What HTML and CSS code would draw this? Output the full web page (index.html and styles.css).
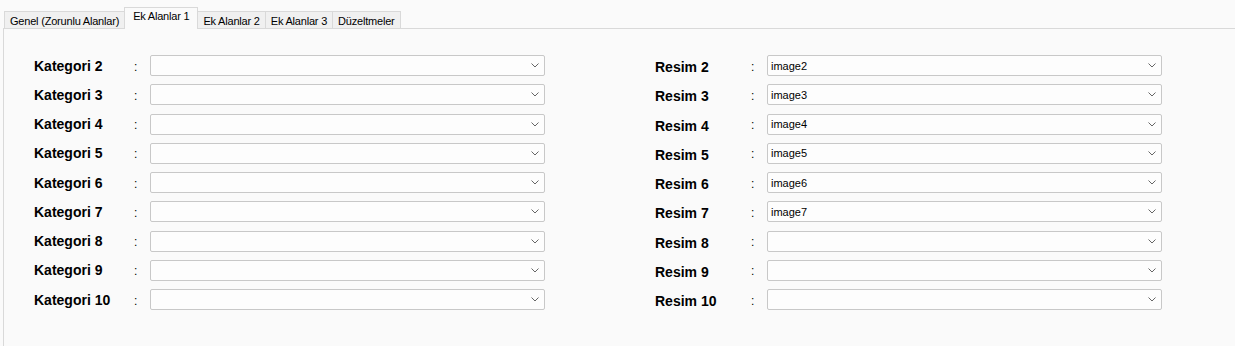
FILE: index.html
```html
<!DOCTYPE html>
<html lang="tr">

<head>
  <meta charset="UTF-8">
  <meta name="viewport" content="width=device-width, initial-scale=1.0">
  <title>Ek Alanlar</title>
  <link rel="stylesheet" href="styles.css">
</head>

<body>
  <div class="tab-strip">
    <div class="tab">Genel (Zorunlu Alanlar)</div>
    <div class="tab active">Ek Alanlar 1</div>
    <div class="tab">Ek Alanlar 2</div>
    <div class="tab">Ek Alanlar 3</div>
    <div class="tab">Düzeltmeler</div>
  </div>

  <div class="tab-panel">
    <div class="field-col left">
      <div class="row"><span class="label">Kategori 2</span><span class="colon">:</span><div class="combo"><span class="value"></span><svg class="chevron" width="8" height="5" viewBox="0 0 8 5"><path d="M0.5 0.5 L4 4 L7.5 0.5" /></svg></div></div>
      <div class="row"><span class="label">Kategori 3</span><span class="colon">:</span><div class="combo"><span class="value"></span><svg class="chevron" width="8" height="5" viewBox="0 0 8 5"><path d="M0.5 0.5 L4 4 L7.5 0.5" /></svg></div></div>
      <div class="row"><span class="label">Kategori 4</span><span class="colon">:</span><div class="combo"><span class="value"></span><svg class="chevron" width="8" height="5" viewBox="0 0 8 5"><path d="M0.5 0.5 L4 4 L7.5 0.5" /></svg></div></div>
      <div class="row"><span class="label">Kategori 5</span><span class="colon">:</span><div class="combo"><span class="value"></span><svg class="chevron" width="8" height="5" viewBox="0 0 8 5"><path d="M0.5 0.5 L4 4 L7.5 0.5" /></svg></div></div>
      <div class="row"><span class="label">Kategori 6</span><span class="colon">:</span><div class="combo"><span class="value"></span><svg class="chevron" width="8" height="5" viewBox="0 0 8 5"><path d="M0.5 0.5 L4 4 L7.5 0.5" /></svg></div></div>
      <div class="row"><span class="label">Kategori 7</span><span class="colon">:</span><div class="combo"><span class="value"></span><svg class="chevron" width="8" height="5" viewBox="0 0 8 5"><path d="M0.5 0.5 L4 4 L7.5 0.5" /></svg></div></div>
      <div class="row"><span class="label">Kategori 8</span><span class="colon">:</span><div class="combo"><span class="value"></span><svg class="chevron" width="8" height="5" viewBox="0 0 8 5"><path d="M0.5 0.5 L4 4 L7.5 0.5" /></svg></div></div>
      <div class="row"><span class="label">Kategori 9</span><span class="colon">:</span><div class="combo"><span class="value"></span><svg class="chevron" width="8" height="5" viewBox="0 0 8 5"><path d="M0.5 0.5 L4 4 L7.5 0.5" /></svg></div></div>
      <div class="row"><span class="label">Kategori 10</span><span class="colon">:</span><div class="combo"><span class="value"></span><svg class="chevron" width="8" height="5" viewBox="0 0 8 5"><path d="M0.5 0.5 L4 4 L7.5 0.5" /></svg></div></div>
    </div>

    <div class="field-col right">
      <div class="row"><span class="label">Resim 2</span><span class="colon">:</span><div class="combo"><span class="value">image2</span><svg class="chevron" width="8" height="5" viewBox="0 0 8 5"><path d="M0.5 0.5 L4 4 L7.5 0.5" /></svg></div></div>
      <div class="row"><span class="label">Resim 3</span><span class="colon">:</span><div class="combo"><span class="value">image3</span><svg class="chevron" width="8" height="5" viewBox="0 0 8 5"><path d="M0.5 0.5 L4 4 L7.5 0.5" /></svg></div></div>
      <div class="row"><span class="label">Resim 4</span><span class="colon">:</span><div class="combo"><span class="value">image4</span><svg class="chevron" width="8" height="5" viewBox="0 0 8 5"><path d="M0.5 0.5 L4 4 L7.5 0.5" /></svg></div></div>
      <div class="row"><span class="label">Resim 5</span><span class="colon">:</span><div class="combo"><span class="value">image5</span><svg class="chevron" width="8" height="5" viewBox="0 0 8 5"><path d="M0.5 0.5 L4 4 L7.5 0.5" /></svg></div></div>
      <div class="row"><span class="label">Resim 6</span><span class="colon">:</span><div class="combo"><span class="value">image6</span><svg class="chevron" width="8" height="5" viewBox="0 0 8 5"><path d="M0.5 0.5 L4 4 L7.5 0.5" /></svg></div></div>
      <div class="row"><span class="label">Resim 7</span><span class="colon">:</span><div class="combo"><span class="value">image7</span><svg class="chevron" width="8" height="5" viewBox="0 0 8 5"><path d="M0.5 0.5 L4 4 L7.5 0.5" /></svg></div></div>
      <div class="row"><span class="label">Resim 8</span><span class="colon">:</span><div class="combo"><span class="value"></span><svg class="chevron" width="8" height="5" viewBox="0 0 8 5"><path d="M0.5 0.5 L4 4 L7.5 0.5" /></svg></div></div>
      <div class="row"><span class="label">Resim 9</span><span class="colon">:</span><div class="combo"><span class="value"></span><svg class="chevron" width="8" height="5" viewBox="0 0 8 5"><path d="M0.5 0.5 L4 4 L7.5 0.5" /></svg></div></div>
      <div class="row"><span class="label">Resim 10</span><span class="colon">:</span><div class="combo"><span class="value"></span><svg class="chevron" width="8" height="5" viewBox="0 0 8 5"><path d="M0.5 0.5 L4 4 L7.5 0.5" /></svg></div></div>
    </div>
  </div>
</body>

</html>
```

FILE: styles.css
```css
html,
body {
  height: 100%;
}

body {
  margin: 0;
  padding: 0 0 0 3px;
  background: #fafafa;
  font-family: "Liberation Sans", Arial, sans-serif;
  display: flex;
  flex-direction: column;
  box-sizing: border-box;
}

.tab-strip {
  display: flex;
  align-items: flex-end;
  height: 28px;
  padding-left: 1px;
}

.tab {
  height: 17px;
  box-sizing: border-box;
  padding: 3px 5px 0 5px;
  background: #f0f0f0;
  border: 1px solid #d9d9d9;
  border-bottom: none;
  margin-right: -1px;
  font-size: 11px;
  letter-spacing: -0.2px;
  line-height: 13px;
  color: #000;
  white-space: nowrap;
}

.tab.active {
  height: 22px;
  margin-bottom: -1px;
  padding: 2px 8px 0 8px;
  background: #fafafa;
  position: relative;
  z-index: 1;
}

.tab-panel {
  flex: 1;
  display: flex;
  gap: 110px;
  padding: 26px 0 0 30px;
  border-top: 1px solid #d9d9d9;
  border-left: 1px solid #d9d9d9;
  background: #fafafa;
}

.field-col {
  display: flex;
  flex-direction: column;
  gap: 8.25px;
}

.row {
  display: flex;
  align-items: center;
  height: 21px;
}

.label {
  width: 100px;
  font-size: 14px;
  font-weight: bold;
  color: #000;
}

.right .label {
  width: 96px;
  padding-top: 3px;
}

.colon {
  width: 16px;
  font-size: 12px;
  color: #000;
  padding-top: 2px;
}

.combo {
  width: 395px;
  height: 21px;
  box-sizing: border-box;
  display: flex;
  align-items: center;
  justify-content: space-between;
  padding: 0 5px 0 3px;
  background: #fdfdfd;
  border: 1px solid #c8c8c8;
  border-radius: 2px;
}

.value {
  font-size: 11px;
  color: #000;
}

.chevron path {
  fill: none;
  stroke: #666;
  stroke-width: 1;
}
```
